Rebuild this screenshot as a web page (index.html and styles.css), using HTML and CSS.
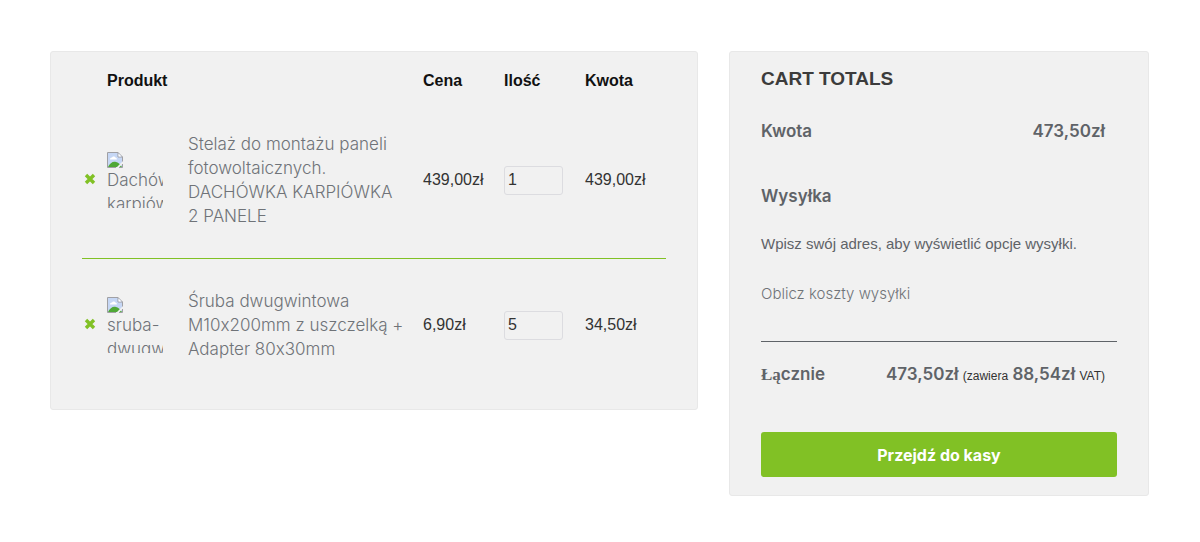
FILE: index.html
```
<!DOCTYPE html>
<html lang="pl">
<head>
<meta charset="utf-8">
<title>Koszyk</title>
<link rel="stylesheet" href="styles.css">
</head>
<body>
<svg class="defs" aria-hidden="true">
  <symbol id="cross" viewBox="0 0 12 12"><path d="M2 2l8 8M10 2l-8 8" stroke="#81c125" stroke-width="3.400"/></symbol>
  <symbol id="missing" viewBox="0 0 16 16">
    <path d="M.5.5h10.500l4.500 4.500v10.500H.5z" fill="#c6d7f5"/>
    <path d="M3 7.500c0-1.300 1-2 2-1.900C5.500 4 8 4 8.400 5.600c1 0 1.600.9 1.400 1.900z" fill="#fff"/>
    <path d="M1 15c2-4 5-6 8-5 2 .5 4 2 6 5z" fill="#4fa836"/>
    <path d="M9 16l7-7v2.500L11.500 16z" fill="#f1f1f1"/>
    <path d="M.5 15.500V.5h10.500l4.500 4.500v4.500M.5 15.500H9M15.500 12v3.500H12M11 .5V5h4.500" fill="none" stroke="#a0a0a4"/>
    <path d="M11.500 1.500v3h3z" fill="#fff"/>
  </symbol>
</svg>
<main class="cart">
  <section class="card">
    <table class="items">
      <colgroup><col class="c-remove"><col class="c-thumb"><col class="c-name"><col class="c-num"><col class="c-num"><col class="c-num"></colgroup>
      <thead>
        <tr><td></td><th colspan="2" scope="col">Produkt</th><th scope="col">Cena</th><th scope="col">Ilość</th><th scope="col">Kwota</th></tr>
      </thead>
      <tbody>
        <tr>
          <td><button class="remove" aria-label="Usuń"><svg><use href="#cross"/></svg></button></td>
          <td><a class="thumb" href="#"><svg><use href="#missing"/></svg>Dachówka karpiówka</a></td>
          <td><a class="name" href="#">Stelaż do montażu paneli fotowoltaicznych. DACHÓWKA KARPIÓWKA 2&nbsp;PANELE</a></td>
          <td>439,00zł</td>
          <td><input class="qty" type="text" value="1" aria-label="Ilość"></td>
          <td>439,00zł</td>
        </tr>
        <tr>
          <td><button class="remove" aria-label="Usuń"><svg><use href="#cross"/></svg></button></td>
          <td><a class="thumb" href="#"><svg><use href="#missing"/></svg>sruba-dwugwintowa</a></td>
          <td><a class="name" href="#">Śruba dwugwintowa M10x200mm z uszczelką + Adapter 80x30mm</a></td>
          <td>6,90zł</td>
          <td><input class="qty" type="text" value="5" aria-label="Ilość"></td>
          <td>34,50zł</td>
        </tr>
      </tbody>
    </table>
  </section>
  <section class="card totals">
    <h2>CART TOTALS</h2>
    <div class="line"><span>Kwota</span><span>473,50zł</span></div>
    <div class="shipping">
      <h3>Wysyłka</h3>
      <p>Wpisz swój adres, aby wyświetlić opcje wysyłki.</p>
      <a href="#">Oblicz koszty wysyłki</a>
    </div>
    <div class="line sum"><span><span class="serif">Łą</span>cznie</span><span>473,50zł <small>(zawiera</small> 88,54zł <small>VAT)</small></span></div>
    <button class="checkout">Przejdź do kasy</button>
  </section>
</main>
</body>
</html>
```
FILE: styles.css
```
* { box-sizing: border-box; }
body {
  margin: 0;
  background: #fff;
  color: #333;
  font: 16px/24px "Liberation Sans", Arial, sans-serif;
}
.defs { position: absolute; width: 0; height: 0; }
a { color: #6f7378; text-decoration: none; }
.cart {
  display: grid;
  grid-template-columns: 648fr 420fr;
  gap: 31px;
  align-items: start;
  padding: 51px 51px 51px 50px;
}
.card {
  padding: 0 31px 18px;
  background: #f1f1f1;
  border: 1px solid #e8e8e8;
  border-radius: 3px;
}
.items { width: 100%; table-layout: fixed; border-collapse: collapse; }
.c-remove { width: 25px; }
.c-thumb, .c-num { width: 81px; }
th { height: 50px; padding: 7px 0 0; text-align: left; color: #111; }
td { padding: 0; }
tbody td { padding: 30px 0; vertical-align: middle; }
tbody tr + tr { border-top: 1px solid #81c125; }
.remove { display: block; padding: 0 2px 2px; border: 0; background: none; }
.remove svg { display: block; width: 12px; height: 12px; }
.thumb {
  display: block;
  width: 56px;
  height: 56px;
  overflow: hidden;
  font-family: Inter, sans-serif;
  font-weight: 300;
}
.thumb svg { display: block; width: 16px; height: 16px; }
.name {
  display: block;
  padding-right: 8px;
  font-family: Inter, sans-serif;
  font-size: 17px;
  font-weight: 300;
  font-feature-settings: "calt" 0;
}
.thumb { font-size: 17px; }
.qty {
  display: block;
  width: 59px;
  height: 29px;
  padding: 0 3px;
  border: 1px solid #dcdce0;
  border-radius: 3px;
  background: #f1f1f1;
  color: #333;
  font: inherit;
}
.totals h2 { margin: 15px 0 28px; font-size: 19px; line-height: 24px; color: #3c3c3c; }
.line {
  display: flex;
  justify-content: space-between;
  padding-right: 12px;
  font-family: Inter, sans-serif;
  font-size: 17px;
  font-weight: 600;
  color: #5f6368;
}
.shipping { margin-top: 41px; padding-bottom: 35px; border-bottom: 1px solid #5f6368; }
.shipping h3 { margin: 0 0 24px; font: 600 17px/24px Inter, sans-serif; color: #5f6368; }
.shipping p { margin: 0 0 26px; font-size: 15px; color: #5f6368; }
.shipping a { display: block; font-family: Inter, sans-serif; font-size: 15px; font-weight: 300; }
.sum { margin: 20px 0 45px; }
.serif { font-family: "Liberation Serif", serif; }
small { font: 12px "Liberation Sans", sans-serif; color: #333; }
.checkout {
  display: block;
  width: 100%;
  height: 45px;
  border: 0;
  border-radius: 3px;
  background: #81c125;
  color: #fff;
  font: 700 16px Inter, sans-serif;
}
```
